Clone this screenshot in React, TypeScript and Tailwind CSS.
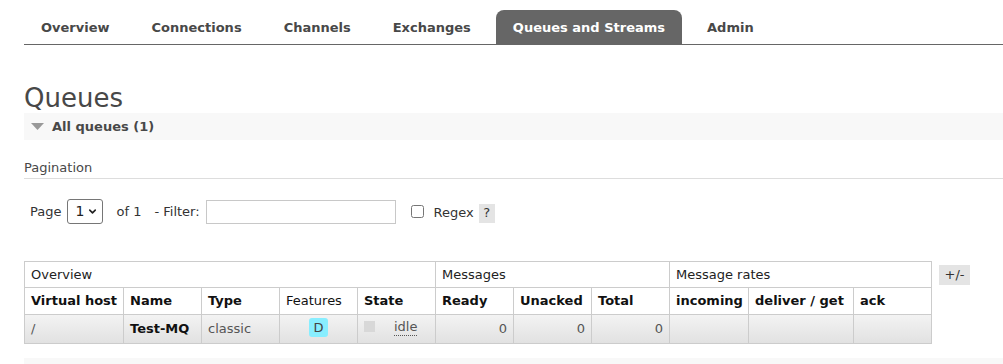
import { ChevronDown } from "lucide-react";

const tabs = ["Overview", "Connections", "Channels", "Exchanges", "Queues and Streams", "Admin"];

const cols = [99, 78, 78, 78, 78, 78, 78, 78, 79, 105, 78];

export default function App() {
  return (
    <div className="h-[364px] overflow-hidden bg-white pl-6 pt-[10px] font-['DejaVu_Sans',sans-serif] text-[#484848]">
      <ul className="flex gap-2 border-b border-[#666]">
        {tabs.map((t) => (
          <li
            key={t}
            className={
              t === "Queues and Streams"
                ? "flex h-[34px] items-center rounded-t-[8px] bg-[#666] px-[17px] pt-[2px] text-[13px] font-bold text-white"
                : "flex h-[34px] items-center px-[17px] pt-[2px] text-[13px] font-bold text-[#484848]"
            }
          >
            {t}
          </li>
        ))}
      </ul>

      <h1 className="mt-[38px] text-[26px] leading-[30px] text-[#484848]">Queues</h1>

      <div className="flex h-[27px] items-center bg-[#f8f8f8] pl-[7px]">
        <svg width="13" height="8" viewBox="0 0 13 8" className="mr-[8px]">
          <polygon points="0,0 13,0 6.5,7" fill="#999" />
        </svg>
        <span className="text-[13px] font-bold text-[#484848]">All queues (1)</span>
      </div>

      <div className="mt-[20px] border-b border-[#ddd] pb-[2px] text-[13px] leading-4 text-[#484848]">
        Pagination
      </div>

      <div className="mt-[20px] flex h-[25px] items-center pl-[6px] text-[13px] text-[#333]">
        <span>Page</span>
        <div className="relative ml-[6px] h-[25px] w-[36px]">
          <select className="h-[25px] w-[36px] appearance-none rounded-[3px] border border-[#767676] bg-white pl-[7px] text-[14px] text-[#222] outline-none">
            <option>1</option>
          </select>
          <ChevronDown
            size={11}
            strokeWidth={3.5}
            className="pointer-events-none absolute right-[5px] top-[7px] text-[#222]"
          />
        </div>
        <span className="ml-[13px]">of 1</span>
        <span className="ml-[13px]">- Filter:</span>
        <input className="ml-[6px] h-[24px] w-[190px] border border-[#c8c8c8] outline-none" />
        <input type="checkbox" className="ml-[15px] h-[13px] w-[13px]" />
        <span className="ml-[10px] mt-[3px]">Regex</span>
        <span className="ml-[5px] mt-[3px] flex h-[19px] w-[16px] items-center justify-center bg-[#e4e4e4] text-[13px]">
          ?
        </span>
      </div>

      <div className="mt-[37px] flex items-start">
        <table className="w-[907px] table-fixed border-collapse whitespace-nowrap text-[13px] text-[#222]">
          <colgroup>
            {cols.map((w, i) => (
              <col key={i} style={{ width: w }} />
            ))}
          </colgroup>
          <thead>
            <tr className="h-[26px]">
              <th colSpan={5} className="border border-[#ccc] px-[6px] text-left font-normal">
                Overview
              </th>
              <th colSpan={3} className="border border-[#ccc] px-[6px] text-left font-normal">
                Messages
              </th>
              <th colSpan={3} className="border border-[#ccc] px-[6px] text-left font-normal">
                Message rates
              </th>
            </tr>
            <tr className="h-[27px] text-[#111]">
              <th className="border border-[#ccc] px-[6px] text-left font-bold">Virtual host</th>
              <th className="border border-[#ccc] px-[6px] text-left font-bold">Name</th>
              <th className="border border-[#ccc] px-[6px] text-left font-bold">Type</th>
              <th className="border border-[#ccc] px-[6px] text-left font-normal">Features</th>
              <th className="border border-[#ccc] px-[6px] text-left font-bold">State</th>
              <th className="border border-[#ccc] px-[6px] text-left font-bold">Ready</th>
              <th className="border border-[#ccc] px-[6px] text-left font-bold">Unacked</th>
              <th className="border border-[#ccc] px-[6px] text-left font-bold">Total</th>
              <th className="border border-[#ccc] px-[6px] text-left font-bold">incoming</th>
              <th className="border border-[#ccc] px-[6px] text-left font-bold">deliver / get</th>
              <th className="border border-[#ccc] px-[6px] text-left font-bold">ack</th>
            </tr>
          </thead>
          <tbody>
            <tr className="h-[29px] bg-gradient-to-b from-[#f3f3f3] to-[#e1e1e1] align-top text-[#555]">
              <td className="border border-[#ccc] px-[6px] pt-[4px]">/</td>
              <td className="border border-[#ccc] px-[6px] pt-[4px] font-bold text-[#111]">Test-MQ</td>
              <td className="border border-[#ccc] px-[6px] pt-[4px]">classic</td>
              <td className="border border-[#ccc] px-[6px] pt-[3px]">
                <div className="flex justify-center">
                  <span className="flex h-[19px] w-[19px] items-center justify-center rounded-[3px] bg-[#88eeff] text-[13px] text-[#444]">
                    D
                  </span>
                </div>
              </td>
              <td className="border border-[#ccc] px-[6px] pt-[5px]">
                <div className="flex items-start">
                  <span className="mt-[1px] h-[11px] w-[11px] bg-[#d8d8d8]" />
                  <span className="ml-[19px] -mt-[1px] border-b border-dotted border-[#555] leading-[16px]">
                    idle
                  </span>
                </div>
              </td>
              <td className="border border-[#ccc] px-[6px] pt-[4px] text-right">0</td>
              <td className="border border-[#ccc] px-[6px] pt-[4px] text-right">0</td>
              <td className="border border-[#ccc] px-[6px] pt-[4px] text-right">0</td>
              <td className="border border-[#ccc] px-[6px] pt-[4px]"></td>
              <td className="border border-[#ccc] px-[6px] pt-[4px]"></td>
              <td className="border border-[#ccc] px-[6px] pt-[4px]"></td>
            </tr>
          </tbody>
        </table>
        <span className="ml-[7px] mt-[4px] flex h-[20px] w-[31px] items-center justify-center bg-[#e4e4e4] text-[13px] text-[#333]">
          +/-
        </span>
      </div>

      <div className="mt-[14px] h-[27px] bg-[#f8f8f8]" />
    </div>
  );
}
